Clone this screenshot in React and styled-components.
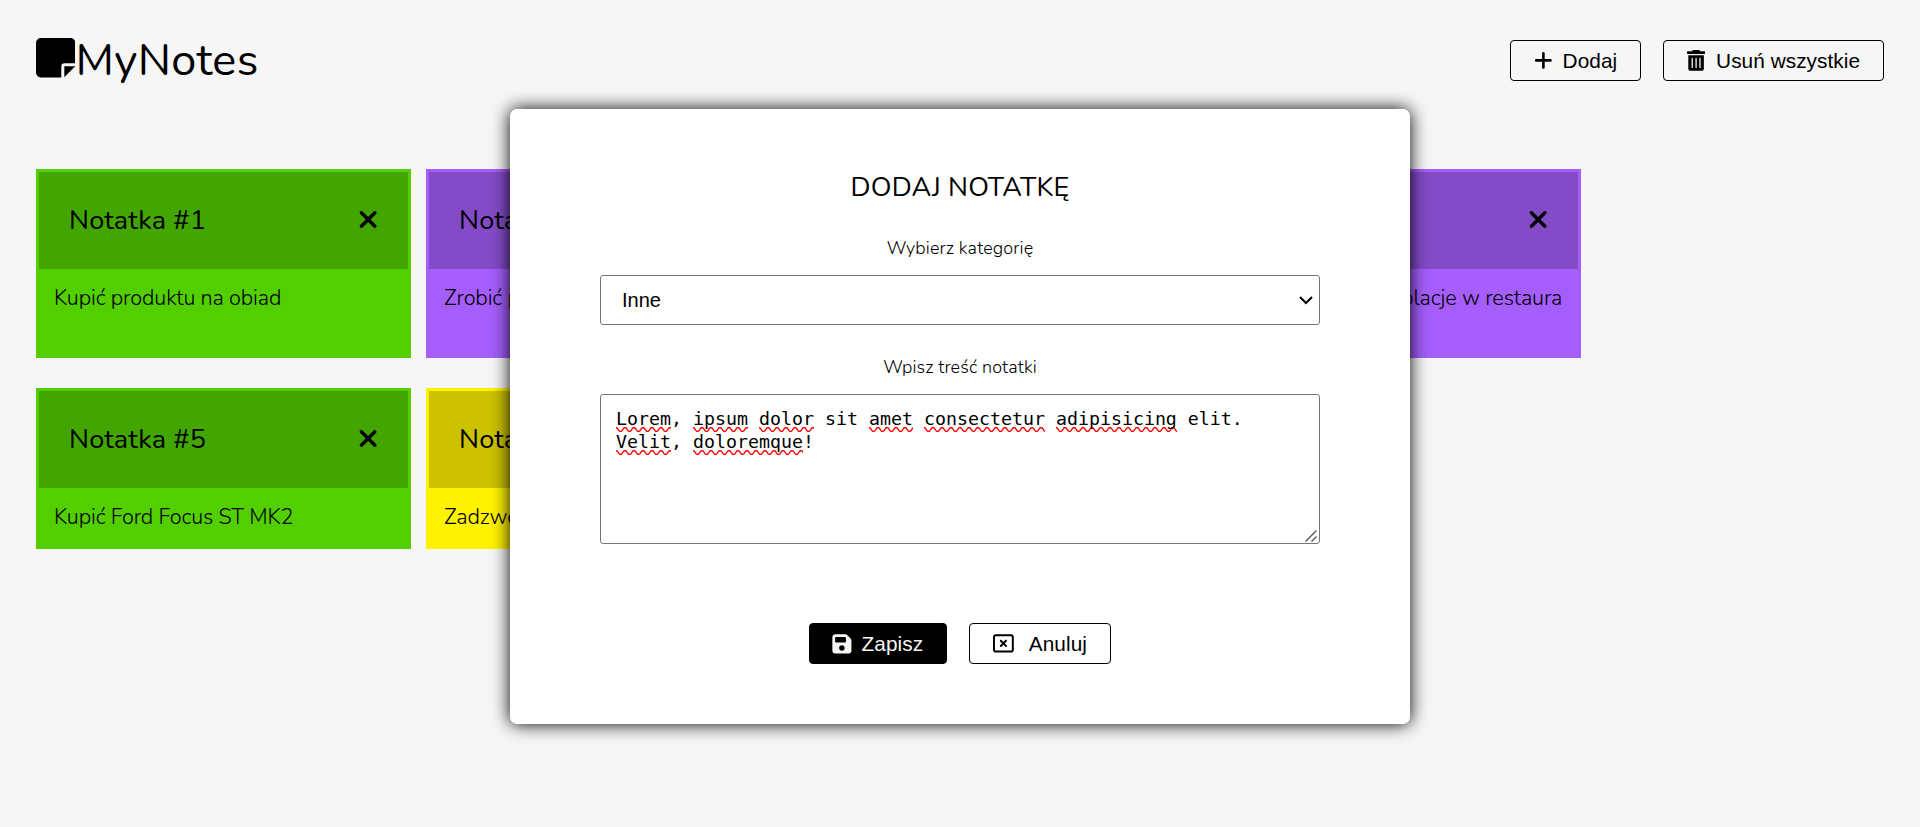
import React from "react";
import styled, { createGlobalStyle } from "styled-components";
import {
  FaPlus,
  FaXmark,
  FaFloppyDisk,
  FaRegRectangleXmark,
} from "react-icons/fa6";

const GlobalStyle = createGlobalStyle`
  *, *::before, *::after { box-sizing: border-box; }
  html, body { margin: 0; padding: 0; }
  body {
    min-height: 100vh;
    overflow: hidden;
    background: #f6f6f6;
    color: #000;
    font-family: Nunito, "Open Sans", sans-serif;
  }
`;

const Header = styled.header`
  display: flex;
  justify-content: space-between;
  align-items: center;
  height: 121px;
  padding: 0 36px;
`;

const Logo = styled.h1`
  display: flex;
  align-items: center;
  margin: 0;
  font-size: 45px;
  font-weight: 400;
  line-height: 61px;
  letter-spacing: 0.35px;

  svg {
    width: 39.4px;
    height: 39.4px;
    margin-top: -5px;
  }
`;

const Actions = styled.div`
  display: flex;
  gap: 22px;
`;

const Button = styled.button`
  display: flex;
  align-items: center;
  justify-content: center;
  gap: ${({ $gap = 9 }) => $gap}px;
  width: ${({ $width }) => $width}px;
  height: 41px;
  padding: 0 ${({ $end = 0 }) => $end}px 0 0;
  border: 1px solid #000;
  border-radius: 4px;
  background: ${({ $dark }) => ($dark ? "#000" : "transparent")};
  color: ${({ $dark }) => ($dark ? "#f6f6f6" : "#000")};
  font: 20.8px/24px "Liberation Sans", Arial, sans-serif;
  letter-spacing: 0.05px;
  white-space: nowrap;

  svg {
    flex: none;
    height: ${({ $icon = 20.8 }) => $icon}px;
    width: auto;
  }
`;

const Notes = styled.main`
  display: grid;
  grid-template-columns: repeat(4, 375px);
  gap: 30px 15px;
  padding: 48px 36px 0;
`;

const palette = {
  green: ["#53cf00", "#42a500"],
  purple: ["#a55efb", "#844bc8"],
  yellow: ["#fff200", "#ccc200"],
};

const Note = styled.article`
  border: 3px solid ${({ $color }) => palette[$color][0]};
  background: ${({ $color }) => palette[$color][0]};
`;

const NoteHeader = styled.div`
  display: flex;
  justify-content: space-between;
  align-items: center;
  height: 97px;
  padding: 0 30px 3px;
  background: ${({ $color }) => palette[$color][1]};
`;

const NoteTitle = styled.h3`
  margin: 2px 0 0;
  font-size: 27px;
  font-weight: 400;
  line-height: 37px;
  letter-spacing: 0.18px;
`;

const CloseButton = styled.button`
  display: flex;
  padding: 0;
  border: 0;
  background: none;
  color: #000;

  svg {
    width: 20.25px;
    height: 27px;
  }
`;

const NoteBody = styled.p`
  margin: 0;
  padding: 15px 15px 15px;
  font-size: 21.6px;
  font-weight: 300;
  line-height: 28px;
  letter-spacing: -0.1px;
  white-space: nowrap;
`;

const Modal = styled.section`
  position: absolute;
  top: 109px;
  left: 510px;
  display: flex;
  flex-direction: column;
  align-items: center;
  width: 900px;
  height: 615px;
  padding-top: 60px;
  border-radius: 7px;
  background: #fff;
  box-shadow: 0 0 18px #000;
`;

const ModalTitle = styled.h2`
  margin: 0 0 30px;
  font-size: 27px;
  font-weight: 400;
  line-height: 37px;
  letter-spacing: 0.18px;
  text-transform: uppercase;
`;

const Label = styled.label`
  margin-bottom: 14px;
  font-size: 18px;
  font-weight: 300;
  line-height: 25px;
  letter-spacing: 0.12px;
`;

const SelectBox = styled.div`
  position: relative;
  width: 720px;
  margin-bottom: 30px;

  svg {
    position: absolute;
    top: 20px;
    right: 7px;
    pointer-events: none;
  }
`;

const Select = styled.select`
  display: block;
  width: 100%;
  height: 50px;
  padding: 0 21px;
  appearance: none;
  border: 1px solid #767676;
  border-radius: 3px;
  background: #fff;
  color: #000;
  font: 20px "Liberation Sans", Arial, sans-serif;
`;

const NoteInput = styled.div`
  position: relative;
  width: 720px;
  height: 150px;
  margin-bottom: 79px;
  padding: 12px 15px;
  border: 1px solid #767676;
  border-radius: 3px;
  background: #fff;
  font-family: Consolas, "DejaVu Sans Mono", monospace;
  font-size: 18.27px;
  line-height: 23px;

  svg {
    position: absolute;
    right: 2px;
    bottom: 1px;
  }
`;

const Misspelled = styled.span`
  padding-bottom: 3px;
  background: url("data:image/svg+xml,%3Csvg xmlns='http://www.w3.org/2000/svg' width='9' height='5'%3E%3Cpath d='M-2.250 2.500Q0 -1.500 2.250 2.500T6.750 2.500T11.250 2.500' fill='none' stroke='red' stroke-width='1.400'/%3E%3C/svg%3E") left bottom / 9px 5px repeat-x;
`;

const notes = [
  { id: 1, color: "green", lines: ["Kupić produktu na obiad"] },
  { id: 2, color: "purple", lines: ["Zrobić projekt na studia"] },
  { id: 3, color: "green", lines: ["Kupić prezent"] },
  { id: 4, color: "purple", lines: ["Zarezerwować te kolacje w restaura", "cji"] },
  { id: 5, color: "green", lines: ["Kupić Ford Focus ST MK2"] },
  { id: 6, color: "yellow", lines: ["Zadzwonić do mamy"] },
];

const words = [
  ["Lorem", true], [", "], ["ipsum", true], [" "], ["dolor", true], [" sit "],
  ["amet", true], [" "], ["consectetur", true], [" "], ["adipisicing", true],
  [" elit. "], ["Velit", true], [", "], ["doloremque", true], ["!"],
];

const StickyNoteIcon = () => (
  <svg viewBox="0 0 39.4 39.4" fill="currentColor">
    <path d="M4.8 0H34.6A4.8 4.8 0 0 1 39.4 4.8V25.3H28.6A3.3 3.3 0 0 0 25.3 28.6V39.4H4.8A4.8 4.8 0 0 1 0 34.6V4.8A4.8 4.8 0 0 1 4.8 0Z" />
    <path d="M28.3 28.3H39.2L28.3 39.2Z" />
  </svg>
);

const TrashIcon = () => (
  <svg viewBox="0 0 448 512" fill="currentColor">
    <path d="M432 32H320l-11.6-23.2C305.7 3.4 300.2 0 294.1 0H153.900c-6.1 0-11.6 3.4-14.3 8.8L128 32H16C7.2 32 0 39.2 0 48v32c0 8.8 7.2 16 16 16h416c8.8 0 16-7.2 16-16V48c0-8.8-7.2-16-16-16zM32 128v336c0 26.5 21.5 48 48 48h288c26.5 0 48-21.5 48-48V128zm112 304a16 16 0 0 1-32 0V208a16 16 0 0 1 32 0zm96 0a16 16 0 0 1-32 0V208a16 16 0 0 1 32 0zm96 0a16 16 0 0 1-32 0V208a16 16 0 0 1 32 0z" />
  </svg>
);

const ChevronIcon = () => (
  <svg width="14" height="10" viewBox="0 0 14 10" fill="none" stroke="#000" strokeWidth="2">
    <path d="M1 2L7 8L13 2" />
  </svg>
);

const ResizeGrip = () => (
  <svg width="12" height="12" viewBox="0 0 12 12" fill="none" stroke="#555" strokeWidth="1.4">
    <path d="M0.5 11.5L11.5 0.5M6.5 11.5L11.5 6.5" />
  </svg>
);

function NoteCard({ id, color, lines }) {
  return (
    <Note $color={color}>
      <NoteHeader $color={color}>
        <NoteTitle>Notatka #{id}</NoteTitle>
        <CloseButton aria-label="Usuń">
          <FaXmark />
        </CloseButton>
      </NoteHeader>
      <NoteBody>
        {lines.map((line, i) => (
          <React.Fragment key={line}>
            {i > 0 && <br />}
            {line}
          </React.Fragment>
        ))}
      </NoteBody>
    </Note>
  );
}

export default function App() {
  return (
    <>
      <GlobalStyle />
      <Header>
        <Logo>
          <StickyNoteIcon />
          MyNotes
        </Logo>
        <Actions>
          <Button $width={131} $end={1}>
            <FaPlus />
            Dodaj
          </Button>
          <Button $width={221} $gap={11}>
            <TrashIcon />
            Usuń wszystkie
          </Button>
        </Actions>
      </Header>
      <Notes>
        {notes.map((note) => (
          <NoteCard key={note.id} {...note} />
        ))}
      </Notes>
      <Modal role="dialog">
        <ModalTitle>Dodaj notatkę</ModalTitle>
        <Label htmlFor="category">Wybierz kategorię</Label>
        <SelectBox>
          <Select id="category">
            <option>Inne</option>
          </Select>
          <ChevronIcon />
        </SelectBox>
        <Label>Wpisz treść notatki</Label>
        <NoteInput role="textbox" aria-multiline="true">
          {words.map(([text, wrong], i) =>
            wrong ? <Misspelled key={i}>{text}</Misspelled> : text
          )}
          <ResizeGrip />
        </NoteInput>
        <Actions>
          <Button $dark $width={138} $icon={21.8} $end={2}>
            <FaFloppyDisk />
            Zapisz
          </Button>
          <Button $gap={15} $width={142}>
            <FaRegRectangleXmark />
            Anuluj
          </Button>
        </Actions>
      </Modal>
    </>
  );
}
